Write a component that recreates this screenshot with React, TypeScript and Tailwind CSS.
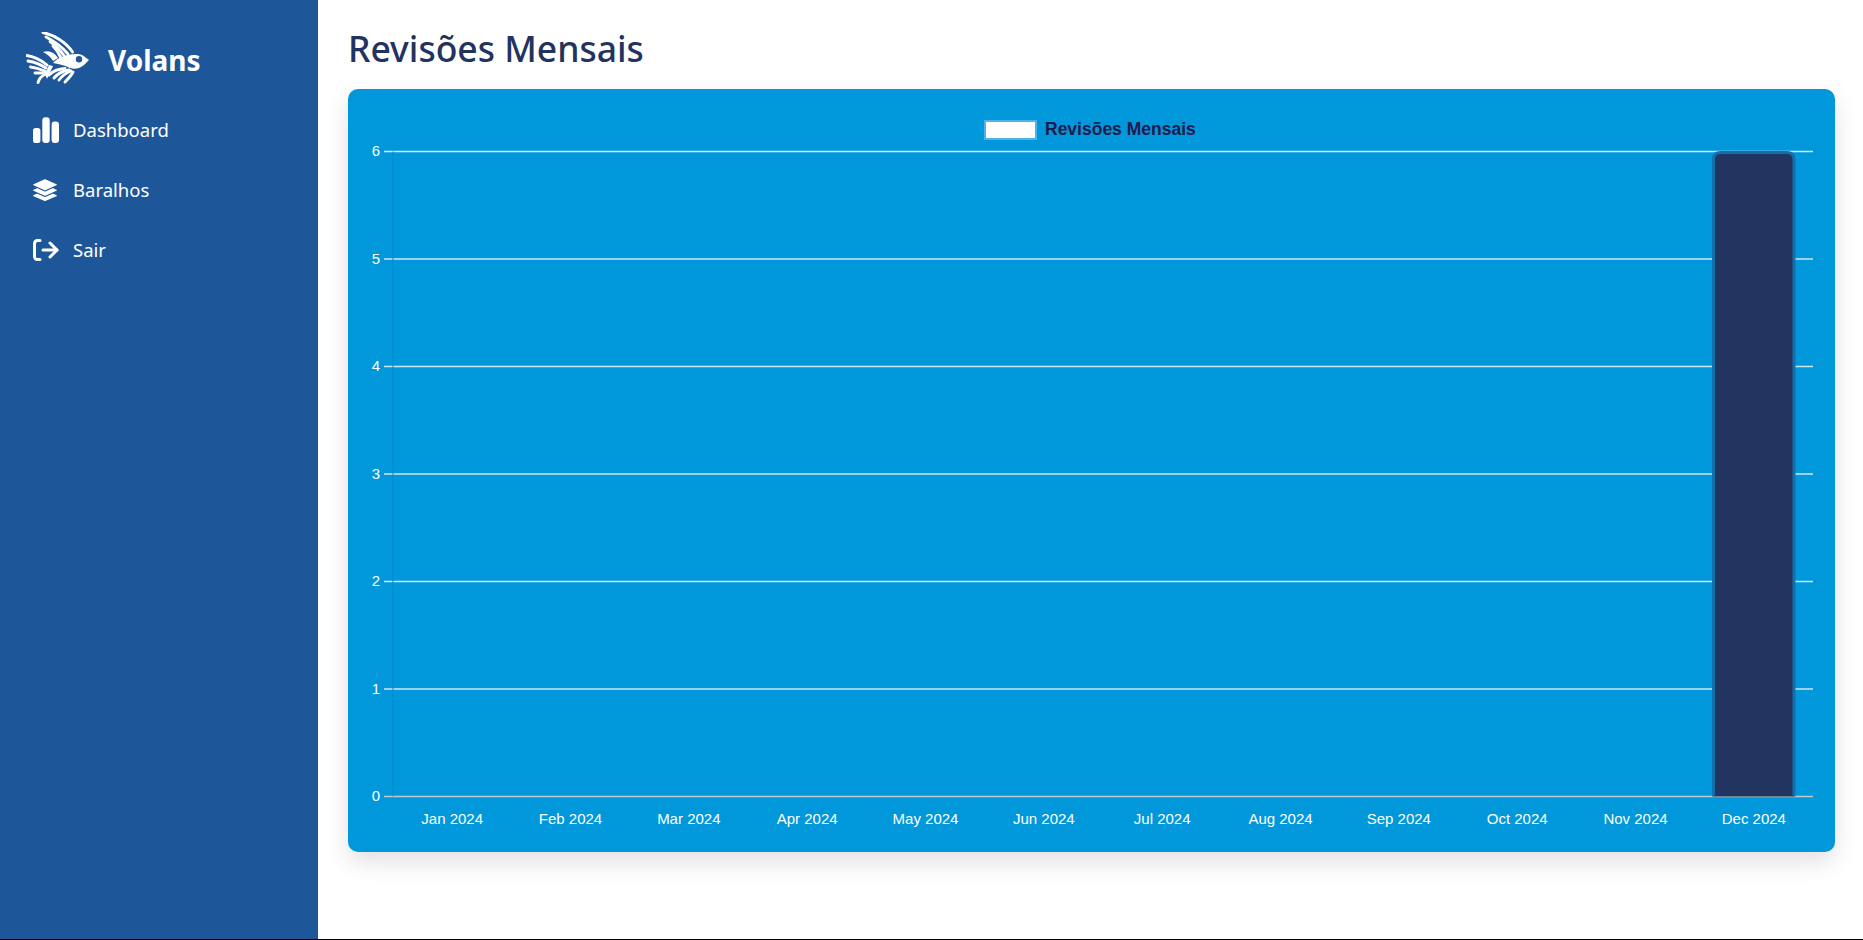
import React from "react";

const months = ["Jan", "Feb", "Mar", "Apr", "May", "Jun", "Jul", "Aug", "Sep", "Oct", "Nov", "Dec"];

// fish mark, fins are fans of rays
function FishLogo() {
  const topFin = [
    "M17 0.500 C28 3 40 10 46.500 20",
    "M20 5 C28 9 36 15 42 22",
    "M24 9.500 C29 13 34 18 38 23.500",
    "M27 14 C30 17 32 20 34.500 25",
  ];
  const tail = [
    "M0.500 23.500 C8 24.500 15 28 21 33",
    "M2 29 C8 30 14 32 20 36",
    "M4.500 35 C9 35.500 14 37 19 39",
    "M9 41 C12 41 15 41 19 41",
    "M12 50.500 C13 47 15 44 20 42",
  ];
  const bellyFin = [
    "M23 43 C27 39 32 37 39 36.500",
    "M28 46 C32 41 37 39 43 38",
    "M33 48 C36 44 40 41 45 39",
    "M39 50 C42 47 45 44 47 40",
  ];
  return (
    <svg viewBox="0 0 66 54" className="w-[66px] h-[54px] shrink-0" fill="white">
      <g fill="none" stroke="white" strokeWidth="2.900" strokeLinecap="round">
        {topFin.map((d) => (
          <path key={d} d={d} />
        ))}
        {tail.map((d) => (
          <path key={d} d={d} />
        ))}
        {bellyFin.map((d) => (
          <path key={d} d={d} />
        ))}
      </g>
      {/* small dorsal */}
      <path d="M17 20 C23 18 28 20 32 26 L27 29 C25 25 21 22 17 20 Z" />
      {/* body */}
      <path
        d="M27 31 C34 23 50 20 57 23.500 L63 28 L58 33 C54 36.500 49 37.500 44 36 C38 33 32 32 27 31 Z M53 24 A3.200 3.200 0 1 0 53 30.400 A3.200 3.200 0 1 0 53 24 Z"
        fillRule="evenodd"
      />
      <path d="M19 42 L23 33 L27 34 L21 47 Z" />
    </svg>
  );
}

function BarsIcon() {
  return (
    <svg viewBox="0 0 26 26" className="w-[26px] h-[26px] shrink-0" fill="white">
      <rect x="0" y="11" width="7.400" height="15" rx="2.500" />
      <rect x="9.300" y="0.300" width="7.400" height="25.700" rx="3.200" />
      <rect x="18.600" y="4.500" width="7.400" height="21.500" rx="3.200" />
    </svg>
  );
}

function StackIcon() {
  return (
    <svg viewBox="0 0 24 22" className="w-[24px] h-[22px] shrink-0" fill="white" stroke="white" strokeWidth="1.200" strokeLinejoin="round">
      <path d="M12 0.800 L23.200 5.800 L12 10.800 L0.800 5.800 Z" />
      <path d="M4.200 9.800 L12 13.400 L19.800 9.800 L23.200 11.200 L12 16.200 L0.800 11.200 Z" />
      <path d="M4.200 15.200 L12 18.800 L19.800 15.200 L23.200 16.600 L12 21.400 L0.800 16.600 Z" />
    </svg>
  );
}

function ExitIcon() {
  return (
    <svg viewBox="0 0 26 22" className="w-[26px] h-[22px] shrink-0" fill="none" stroke="white" strokeWidth="3" strokeLinecap="round" strokeLinejoin="round">
      <path d="M7 1.500 H4.500 a3 3 0 0 0 -3 3 V17.500 a3 3 0 0 0 3 3 H7" />
      <path d="M10 11 H24" />
      <path d="M17 4 L24 11 L17 18" />
    </svg>
  );
}

function NavItem({ icon, label }: { icon: React.ReactNode; label: string }) {
  return (
    <a className="flex items-center h-[60px] pl-[33px] text-white text-[18.500px]">
      <span className="w-[40px] flex items-center">{icon}</span>
      {label}
    </a>
  );
}

function RevisionsChart() {
  const left = 29;
  const right = 1449;
  const zero = 691.5;
  const step = 107.5;
  const catWidth = (right - left) / 12;

  return (
    <svg width="1455" height="731" viewBox="0 0 1455 731" className="block font-['Liberation_Sans',Arial,sans-serif]">
      {/* legend */}
      <rect x="621" y="16" width="51" height="18" fill="white" stroke="#4db3ea" strokeWidth="2" />
      <text x="681" y="29.500" fontSize="17.500" fontWeight="700" fill="#1f1b4d">
        Revisões Mensais
      </text>

      {/* grid */}
      {[0, 1, 2, 3, 4, 5, 6].map((v) => {
        const y = zero - v * step;
        return (
          <g key={v}>
            <line x1={20} x2={right} y1={y} y2={y} stroke={v === 0 ? "#c4c9cc" : "#cfe6f3"} strokeWidth="1.500" />
            <text x="16" y={y + 4.500} fontSize="15" fill="white" textAnchor="end">
              {v}
            </text>
          </g>
        );
      })}
      <line x1={left} x2={left} y1={zero - 6 * step} y2={zero} stroke="#0a86c4" strokeWidth="1" />

      {/* only december has data */}
      <path
        d={`M1349.500 ${zero} V${zero - 6 * step + 8} q0 -7 7 -7 H1423 q7 0 7 7 V${zero}`}
        fill="#223460"
        stroke="#1270ad"
        strokeWidth="3"
      />

      {months.map((m, i) => (
        <text key={m} x={left + catWidth * (i + 0.5)} y="719" fontSize="15" fill="white" textAnchor="middle">
          {m} 2024
        </text>
      ))}
    </svg>
  );
}

export default function App() {
  return (
    <div className="flex h-[940px] border-b border-black bg-white font-['Noto_Sans',sans-serif]">
      <aside className="w-[318px] shrink-0 bg-[#1e5799] flex flex-col">
        <div className="flex items-center pl-[26px] pt-[32px] pb-[14px] gap-[16px]">
          <FishLogo />
          <span className="text-white text-[28px] font-bold leading-none pt-[2px]">Volans</span>
        </div>
        <nav className="flex flex-col">
          <NavItem icon={<BarsIcon />} label="Dashboard" />
          <NavItem icon={<StackIcon />} label="Baralhos" />
          <NavItem icon={<ExitIcon />} label="Sair" />
        </nav>
      </aside>
      <main className="flex-1 pl-[30px] pr-[28px]">
        <h1 className="text-[#22335f] text-[35.500px] leading-[50px] font-medium pt-[23px] h-[89px] box-border">Revisões Mensais</h1>
        <div className="bg-[#0098db] rounded-[10px] p-4 shadow-[0_10px_25px_rgba(0,0,0,0.12)] h-[763px]">
          <RevisionsChart />
        </div>
      </main>
    </div>
  );
}
